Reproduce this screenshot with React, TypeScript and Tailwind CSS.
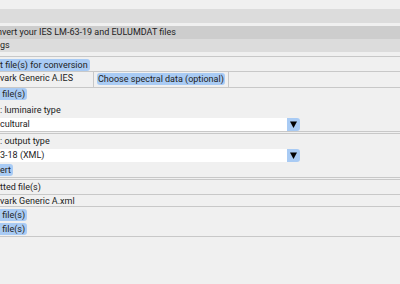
export default function App() {
  const btn = "inline-flex h-[12px] items-center whitespace-nowrap rounded-r-[3px] bg-[#a9cbf4] pr-[2px] leading-[12px]";
  const arrow = (
    <div className="flex w-[13px] items-center justify-center rounded-r-[3px] bg-[#a9cbf4]">
      <svg width="7" height="7" viewBox="0 0 7 7">
        <path d="M0 0.5h7L3.5 7z" fill="#000" />
      </svg>
    </div>
  );
  return (
    <div className="h-[284px] w-[400px] overflow-hidden bg-[#f0f0f0] text-[9px] text-[#222222]" style={{ fontFamily: "Roboto, sans-serif" }}>
      <div className="h-[9px]" />
      <div className="h-[14px] bg-[#dcdcdc]" />
      <div className="h-[3px]" />
      <div className="flex h-[13px] items-center whitespace-nowrap bg-[#cdcdcd] leading-[13px]">
        <span className="-ml-[14px]">Convert your IES LM-63-19 and EULUMDAT files</span>
      </div>
      <div className="flex h-[13px] items-center whitespace-nowrap bg-[#dcdcdc] leading-[13px]">
        <span>gs</span>
      </div>
      <div className="h-[4px]" />

      {/* input files */}
      <div className="border-y border-[#c8c8c8]">
        <div className="flex h-[14px] items-end">
          <span className={btn}>t file(s) for conversion</span>
        </div>
        <div className="flex h-[17px] border-y border-[#c8c8c8]">
          <div className="w-[94px] whitespace-nowrap border-r border-[#c8c8c8] leading-[13px]">vark Generic A.IES</div>
          <div className="w-[135px] border-r border-[#c8c8c8] pl-[3px] pt-[1px]">
            <span className="inline-flex h-[12px] items-center whitespace-nowrap rounded-[3px] bg-[#a9cbf4] px-[1px] leading-[12px]">
              Choose spectral data (optional)
            </span>
          </div>
        </div>
        <div className="flex h-[12px]">
          <span className={btn}>&nbsp;file(s)</span>
        </div>
        <div className="h-[18px] whitespace-nowrap pt-[4px] leading-[12px]">: luminaire type</div>
        <div className="flex h-[13px]">
          <div className="w-[287px] bg-white leading-[13px]">cultural</div>
          {arrow}
        </div>
      </div>

      {/* output type */}
      <div className="mt-[1px] border-y border-[#c8c8c8]">
        <div className="flex h-[15px] items-center whitespace-nowrap">
          <span>: output type</span>
        </div>
        <div className="flex h-[13px]">
          <div className="w-[287px] bg-white leading-[13px]">3-18 (XML)</div>
          {arrow}
        </div>
        <div className="h-[15px] pt-[2px]">
          <span className={btn}>ert</span>
        </div>
      </div>

      {/* converted files */}
      <div className="mt-[1px] border-b border-[#c8c8c8]">
        <div className="h-[16px] border-y border-[#c8c8c8] leading-[14px]">tted file(s)</div>
        <div className="h-[12px] border-b border-[#c8c8c8] pt-[1px] leading-[11px]">vark Generic A.xml</div>
        <div className="flex h-[14px] items-end">
          <span className={btn}>&nbsp;file(s)</span>
        </div>
        <div className="flex h-[15px] items-center">
          <span className={btn}>&nbsp;file(s)</span>
        </div>
      </div>
    </div>
  );
}
